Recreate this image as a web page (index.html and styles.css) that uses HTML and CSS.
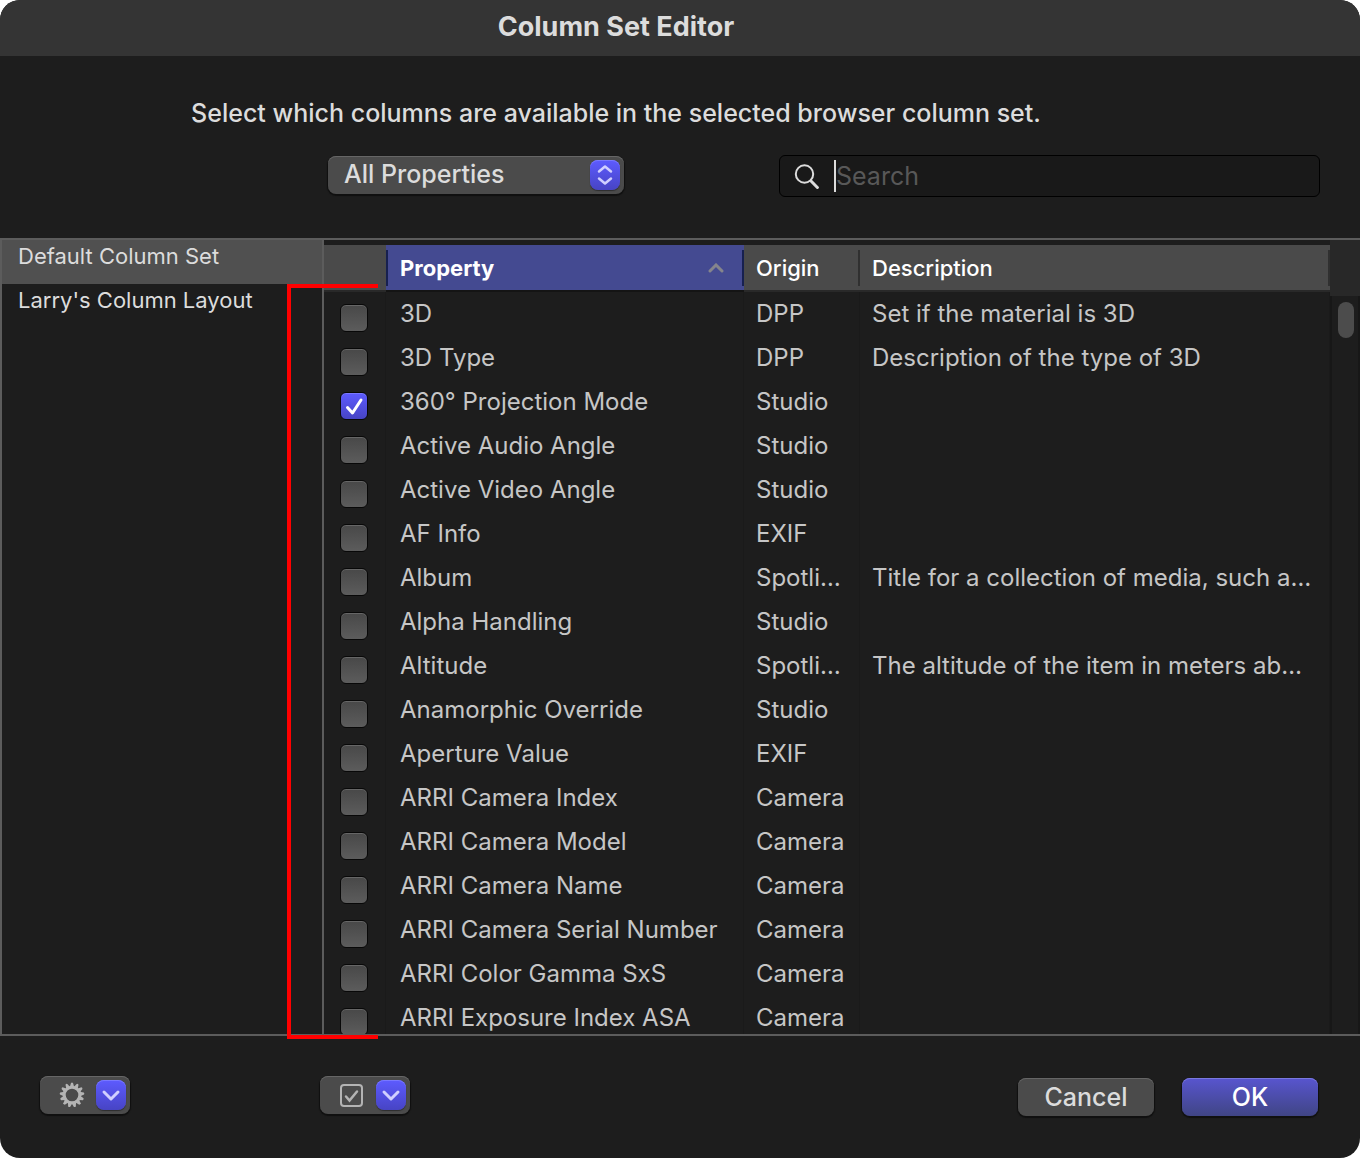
FILE: index.html
```html
<!DOCTYPE html>
<html lang="en">
<head>
  <meta charset="UTF-8" />
  <meta name="viewport" content="width=device-width, initial-scale=1" />
  <title>Column Set Editor</title>
  <link rel="stylesheet" href="styles.css">
</head>
<body>
  <div class="window">
    <header class="titlebar">
      <h1>Column Set Editor</h1>
    </header>

    <div class="toolbar">
      <p class="intro">Select which columns are available in the selected browser column set.</p>
      <div class="filters">
        <div class="popup">
          <select class="popup-select" aria-label="Property filter">
            <option>All Properties</option>
          </select>
          <span class="knob popup-knob">
            <svg width="30" height="30" viewBox="0 0 30 30"><path d="M9 11.500l6-5 6 5M9 18.500l6 5 6-5" /></svg>
          </span>
        </div>
        <label class="search">
          <svg class="search-icon" width="26" height="26" viewBox="0 0 26 26"><circle cx="10.500" cy="11" r="8.700" /><path d="M17 18l6.400 6.500" /></svg>
          <span class="caret"></span>
          <input type="search" placeholder="Search" aria-label="Search" />
        </label>
      </div>
    </div>

    <main class="editor">
      <nav class="sets">
        <button class="set selected" type="button">Default Column Set</button>
        <button class="set" type="button">Larry's Column Layout</button>
      </nav>

      <section class="properties">
        <div class="bracket"></div>
        <div class="table-wrap">
          <table>
            <colgroup>
              <col class="col-check" />
              <col class="col-property" />
              <col class="col-origin" />
              <col />
            </colgroup>
            <thead>
              <tr>
                <th></th>
                <th class="sorted">
                  <div class="th-inner">Property
                    <svg width="16" height="10" viewBox="0 0 16 10"><path d="M2 8l6-6 6 6" /></svg>
                  </div>
                </th>
                <th><div class="th-inner">Origin</div></th>
                <th><div class="th-inner">Description</div></th>
              </tr>
            </thead>
            <tbody id="rows"></tbody>
          </table>
        </div>
        <div class="scrollbar">
          <div class="scroll-corner"></div>
          <div class="track"><div class="thumb"></div></div>
        </div>
      </section>
    </main>

    <footer class="actions">
      <button class="menu-btn" type="button" aria-label="Column set actions">
        <svg class="menu-icon" id="gear" width="26" height="26" viewBox="0 0 26 26"><circle class="ring" cx="13" cy="13" r="7.800" /></svg>
        <span class="knob">
          <svg width="30" height="30" viewBox="0 0 30 30"><path d="M8 12l7 7 7-7" /></svg>
        </span>
      </button>
      <button class="menu-btn check-menu" type="button" aria-label="Check actions">
        <svg class="menu-icon" width="26" height="26" viewBox="0 0 26 26"><rect class="box" x="2" y="3" width="21" height="21" rx="3" /><path class="tick" d="M7 14.500l3.500 4 7.500-9" /></svg>
        <span class="knob">
          <svg width="30" height="30" viewBox="0 0 30 30"><path d="M8 12l7 7 7-7" /></svg>
        </span>
      </button>
      <button class="btn cancel" type="button">Cancel</button>
      <button class="btn ok" type="button">OK</button>
    </footer>
  </div>

  <script>
    const properties = [
      ['3D', 'DPP', 'Set if the material is 3D'],
      ['3D Type', 'DPP', 'Description of the type of 3D'],
      ['360° Projection Mode', 'Studio', '', true],
      ['Active Audio Angle', 'Studio', ''],
      ['Active Video Angle', 'Studio', ''],
      ['AF Info', 'EXIF', ''],
      ['Album', 'Spotli…', 'Title for a collection of media, such a…'],
      ['Alpha Handling', 'Studio', ''],
      ['Altitude', 'Spotli…', 'The altitude of the item in meters ab…'],
      ['Anamorphic Override', 'Studio', ''],
      ['Aperture Value', 'EXIF', ''],
      ['ARRI Camera Index', 'Camera', ''],
      ['ARRI Camera Model', 'Camera', ''],
      ['ARRI Camera Name', 'Camera', ''],
      ['ARRI Camera Serial Number', 'Camera', ''],
      ['ARRI Color Gamma SxS', 'Camera', ''],
      ['ARRI Exposure Index ASA', 'Camera', '']
    ];

    document.getElementById('rows').innerHTML = properties.map(([name, origin, description, checked], i) => `
      <tr>
        <td class="check">
          <span class="checkbox">
            <input type="checkbox" id="prop${i}" ${checked ? 'checked' : ''} />
            <svg width="28" height="28" viewBox="0 0 28 28"><path d="M7.500 15.500l5 5.500 8.500-13" /></svg>
          </span>
        </td>
        <td><label for="prop${i}">${name}</label></td>
        <td>${origin}</td>
        <td>${description}</td>
      </tr>
    `).join('');

    // gear teeth
    const gear = document.getElementById('gear');
    for (let i = 0; i < 13; i++) {
      const tooth = document.createElementNS('http://www.w3.org/2000/svg', 'path');
      tooth.setAttribute('d', 'M10.800 5L12 1q1-.8 2 0l1.200 4z');
      tooth.setAttribute('transform', `rotate(${i * 360 / 13} 13 13)`);
      gear.appendChild(tooth);
    }
  </script>
</body>
</html>
```
FILE: styles.css
```css
:root {
  --window: #1d1d1d;
  --titlebar: #343434;
  --control: #4b4b4b;
  --line: #5c5c5c;
  --text: #dcdcdc;
  --text-row: #c6c6c6;
  --icon: #b4b4b4;
  --accent-top: #5d5bff;
  --accent-bottom: #4744c4;
}
* {
  box-sizing: border-box;
}
body {
  margin: 0;
  background: white;
  color: var(--text);
  font-family: Inter, "Liberation Sans", sans-serif;
}
button, input, select {
  font-family: inherit;
  color: inherit;
  border: none;
  margin: 0;
}
svg {
  display: block;
  fill: none;
}
.window {
  display: flex;
  flex-direction: column;
  height: 100vh;
  background: var(--window);
  border-radius: 20px;
  overflow: hidden;
}
.titlebar {
  height: 56px;
  padding-right: 128px;
  background: var(--titlebar);
}
h1 {
  margin: 0;
  font-size: 27px;
  line-height: 54px;
  font-weight: 700;
  text-align: center;
}
.toolbar {
  height: 182px;
  padding-top: 41px;
}
.intro {
  margin: 0;
  padding-right: 128px;
  font-size: 25px;
  line-height: 32px;
  font-weight: 500;
  text-align: center;
}
.filters {
  display: flex;
  align-items: flex-start;
  justify-content: space-between;
  margin-top: 26px;
  padding: 0 40px 0 328px;
}
.popup {
  position: relative;
  width: 296px;
  margin-top: 1px;
}
.popup-select {
  display: block;
  appearance: none;
  width: 100%;
  height: 38px;
  padding: 0 44px 2px 16px;
  border-radius: 8px;
  background: var(--control);
  font-size: 25px;
  font-weight: 500;
  box-shadow: inset 0 1px #666, 0 1px 1px 1px #101010;
}
.knob {
  width: 30px;
  height: 30px;
  border-radius: 8px;
  background: linear-gradient(var(--accent-top), var(--accent-bottom));
  box-shadow: inset 0 1px #7978ff, 0 1px 1px #2d2d2d;
}
.knob path {
  stroke: #d0cfff;
  stroke-width: 3;
  stroke-linecap: round;
  stroke-linejoin: round;
}
.popup-knob {
  position: absolute;
  top: 4px;
  right: 4px;
  pointer-events: none;
}
.popup-knob path {
  stroke-width: 2.5;
}
.search {
  display: flex;
  align-items: center;
  width: 541px;
  height: 42px;
  padding: 0 14px;
  border: 1px solid black;
  border-radius: 6px;
  background: #191919;
}
.search-icon {
  stroke: var(--text);
  stroke-width: 2;
  stroke-linecap: round;
}
.search-icon path {
  stroke-width: 3;
}
.caret {
  width: 2px;
  height: 32px;
  margin-left: 14px;
  background: var(--text);
}
.search input {
  flex: 1;
  min-width: 0;
  padding: 0;
  background: none;
  outline: none;
  font-size: 25px;
}
.search input::placeholder {
  color: #585858;
}
.editor {
  flex: 1;
  min-height: 0;
  display: grid;
  grid-template-columns: 322px 1fr;
  border: 2px solid var(--line);
  border-right: none;
}
.sets {
  border-right: 2px solid var(--line);
}
.set {
  display: block;
  width: 100%;
  height: 44px;
  padding: 0 16px 12px;
  background: none;
  font-size: 22px;
  line-height: 32px;
  text-align: left;
}
.set.selected {
  background: #505050;
}
.properties {
  position: relative;
  display: grid;
  grid-template-columns: 1fr 30px;
  min-height: 0;
}
/* callout round the check box column */
.bracket {
  position: absolute;
  top: 44px;
  bottom: -5px;
  left: -37px;
  width: 91px;
  border: 4px solid red;
  border-right: none;
  pointer-events: none;
}
.table-wrap {
  min-height: 0;
  padding-top: 5px;
  overflow: hidden;
}
table {
  width: 100%;
  table-layout: fixed;
  border-collapse: separate;
  border-spacing: 0;
}
.col-check {
  width: 62px;
}
.col-property {
  width: 358px;
}
.col-origin {
  width: 116px;
}
th {
  height: 47px;
  padding: 0;
  background: #4a4a4a;
  border-bottom: 2px solid #292929;
  color: white;
  font-size: 22px;
  font-weight: 500;
  text-align: left;
}
.th-inner {
  display: flex;
  align-items: center;
  justify-content: space-between;
  height: 36px;
  padding: 0 18px 0 12px;
  border-right: 2px solid #303030;
}
th.sorted {
  background: #444a91;
  border-bottom-color: #141414;
  font-weight: 700;
}
.sorted .th-inner {
  border-left: 2px solid #172050;
  border-right-color: #172050;
}
.sorted svg {
  stroke: #85858c;
  stroke-width: 3;
  stroke-linecap: round;
}
td {
  height: 44px;
  padding: 0 0 0 12px;
  border-right: 1px solid #1a1a1a;
  color: var(--text-row);
  font-size: 24px;
  line-height: 44px;
  white-space: nowrap;
}
td:nth-child(2) {
  padding-left: 14px;
}
.check {
  padding: 8px 0 0 16px;
}
.checkbox {
  display: grid;
  width: 28px;
  height: 28px;
}
.checkbox > * {
  grid-area: 1 / 1;
}
.checkbox input {
  appearance: none;
  width: 28px;
  height: 28px;
  border: 1px solid #080808;
  border-radius: 6px;
  background: linear-gradient(#484848, #5c5c5c);
  box-shadow: inset 0 1px #666;
}
.checkbox svg {
  visibility: hidden;
  pointer-events: none;
  stroke: white;
  stroke-width: 3;
  stroke-linecap: round;
  stroke-linejoin: round;
}
.checkbox input:checked {
  background: linear-gradient(var(--accent-top), var(--accent-bottom));
  box-shadow: inset 0 1px #7978ff;
}
.checkbox input:checked + svg {
  visibility: visible;
}
.scrollbar {
  display: flex;
  flex-direction: column;
}
.scroll-corner {
  height: 56px;
  background: #282828;
}
.track {
  flex: 1;
  padding: 6px 4px 0 6px;
  border: solid #171717;
  border-width: 0 2px;
}
.thumb {
  width: 16px;
  height: 36px;
  border-radius: 8px;
  background: #4c4c4c;
}
.actions {
  display: flex;
  align-items: flex-start;
  height: 122px;
  padding: 40px 42px 0 40px;
}
.menu-btn {
  display: flex;
  align-items: center;
  justify-content: space-between;
  width: 90px;
  height: 38px;
  padding: 0 4px 0 19px;
  border-radius: 8px;
  background: var(--control);
  box-shadow: inset 0 1px #666, 0 1px 1px 1px #101010;
}
.check-menu {
  margin-left: 190px;
}
.menu-icon {
  fill: var(--icon);
}
.ring, .box, .tick {
  fill: none;
  stroke: var(--icon);
  stroke-width: 2;
}
.tick {
  stroke-width: 2.5;
  stroke-linecap: round;
}
.ring {
  stroke-width: 3;
}
.btn {
  width: 136px;
  height: 38px;
  margin-top: 2px;
  padding: 0;
  border-radius: 8px;
  background: var(--control);
  font-size: 25px;
  line-height: 38px;
  font-weight: 500;
  box-shadow: inset 0 1px #666, 0 1px 1px 1px #101010;
}
.cancel {
  margin-left: auto;
}
.ok {
  margin-left: 28px;
  background: linear-gradient(#5855cf, #404585);
  color: white;
  box-shadow: inset 0 1px #7a78e0, 0 1px 1px 1px #101010;
}
```
